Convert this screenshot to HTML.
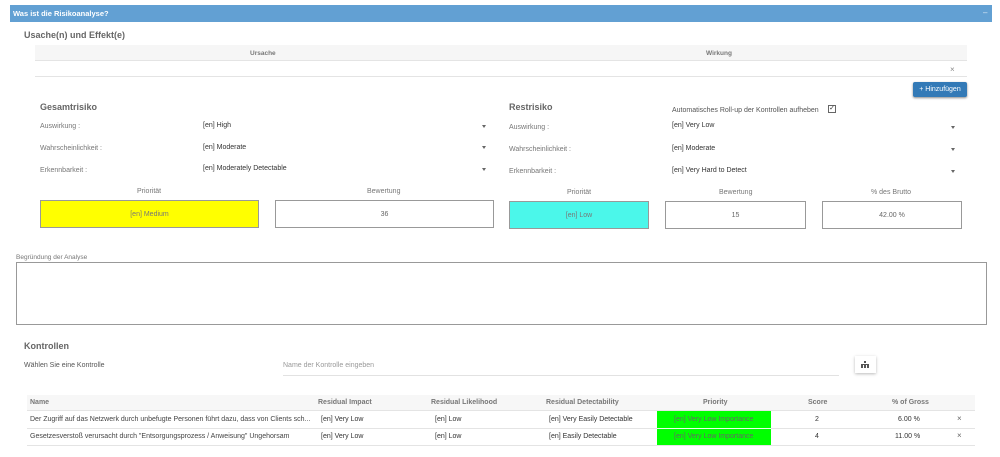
<!DOCTYPE html>
<html><head><meta charset="utf-8"><style>
*{margin:0;padding:0;box-sizing:border-box}
body{width:1000px;height:457px;background:#fff;font-family:"Liberation Sans",sans-serif;color:#555;position:relative;overflow:hidden;font-size:7px}
.a{position:absolute;white-space:nowrap}
.b{font-weight:bold}
.box{position:absolute;border:1px solid #999;display:flex;align-items:center;justify-content:center;font-size:7px;color:#666}
.arr{position:absolute;width:0;height:0;border-left:2px solid transparent;border-right:2px solid transparent;border-top:3px solid #666}
.lbl{color:#777;font-size:7px}
.val{color:#333;font-size:7px}
.hd{color:#777;font-size:7px;font-weight:bold}
</style></head><body>
<div class="a" style="left:10px;top:5px;width:982px;height:17px;background:#62a0d3"></div>
<div class="a b" style="left:13px;top:9px;color:#fff;font-size:7.5px">Was ist die Risikoanalyse?</div>
<div class="a" style="left:983px;top:8px;color:#dfeaf5;font-size:8px">–</div>

<div class="a b" style="left:24px;top:30px;font-size:9px;color:#666">Usache(n) und Effekt(e)</div>
<div class="a" style="left:35px;top:45px;width:932px;height:16px;background:#f6f6f6;border-bottom:1px solid #e4e4e4"></div>
<div class="a hd" style="left:250px;top:50px;font-size:6.5px">Ursache</div>
<div class="a hd" style="left:706px;top:50px;font-size:6.5px">Wirkung</div>
<div class="a" style="left:35px;top:76px;width:932px;height:1px;background:#e4e4e4"></div>
<div class="a" style="left:950px;top:65px;color:#888;font-size:8px">×</div>
<div class="a" style="left:913px;top:82px;width:54px;height:15px;background:#337ab7;border-radius:2px;box-shadow:0 1px 2px #888;color:#fff;font-size:7px;text-align:center;line-height:15px">+ Hinzufügen</div>

<div class="a b" style="left:40px;top:102px;font-size:9px;color:#666">Gesamtrisiko</div>
<div class="a lbl" style="left:40px;top:123px">Auswirkung :</div>
<div class="a lbl" style="left:40px;top:145px">Wahrscheinlichkeit :</div>
<div class="a lbl" style="left:40px;top:167px">Erkennbarkeit :</div>
<div class="a val" style="left:203px;top:122px">[en] High</div>
<div class="a val" style="left:203px;top:144px">[en] Moderate</div>
<div class="a val" style="left:203px;top:165px">[en] Moderately Detectable</div>
<div class="arr" style="left:482px;top:125px"></div>
<div class="arr" style="left:482px;top:146px"></div>
<div class="arr" style="left:482px;top:168px"></div>
<div class="a lbl" style="left:137px;top:188px">Priorität</div>
<div class="a lbl" style="left:367px;top:188px">Bewertung</div>
<div class="box" style="left:40px;top:200px;width:219px;height:28px;background:#ffff00;color:#777">[en] Medium</div>
<div class="box" style="left:275px;top:200px;width:219px;height:28px">36</div>

<div class="a b" style="left:509px;top:102px;font-size:9px;color:#666">Restrisiko</div>
<div class="a lbl" style="left:672px;top:107px;color:#555">Automatisches Roll-up der Kontrollen aufheben</div>
<div class="a" style="left:828px;top:105px;width:8px;height:8px;border:1px solid #666;font-size:7px;line-height:6px;text-align:center;color:#333">✓</div>
<div class="a lbl" style="left:509px;top:124px">Auswirkung :</div>
<div class="a lbl" style="left:509px;top:146px">Wahrscheinlichkeit :</div>
<div class="a lbl" style="left:509px;top:168px">Erkennbarkeit :</div>
<div class="a val" style="left:672px;top:122px">[en] Very Low</div>
<div class="a val" style="left:672px;top:145px">[en] Moderate</div>
<div class="a val" style="left:672px;top:167px">[en] Very Hard to Detect</div>
<div class="arr" style="left:951px;top:126px"></div>
<div class="arr" style="left:951px;top:148px"></div>
<div class="arr" style="left:951px;top:170px"></div>
<div class="a lbl" style="left:567px;top:189px">Priorität</div>
<div class="a lbl" style="left:719px;top:189px">Bewertung</div>
<div class="a lbl" style="left:871px;top:189px">% des Brutto</div>
<div class="box" style="left:509px;top:201px;width:140px;height:28px;background:#4bf7ea;color:#777">[en] Low</div>
<div class="box" style="left:665px;top:201px;width:141px;height:28px">15</div>
<div class="box" style="left:822px;top:201px;width:140px;height:28px">42.00 %</div>

<div class="a lbl" style="left:16px;top:254px;font-size:6.5px">Begründung der Analyse</div>
<div class="a" style="left:16px;top:262px;width:971px;height:63px;border:1px solid #999"></div>

<div class="a b" style="left:24px;top:341px;font-size:9px;color:#666">Kontrollen</div>
<div class="a" style="left:24px;top:362px;font-size:7px;color:#555">Wählen Sie eine Kontrolle</div>
<div class="a" style="left:283px;top:362px;font-size:7px;color:#999">Name der Kontrolle eingeben</div>
<div class="a" style="left:283px;top:375px;width:556px;height:1px;background:#e2e2e2"></div>
<div class="a" style="left:855px;top:356px;width:21px;height:17px;background:#fff;box-shadow:0 1px 3px #bbb"></div>
<svg class="a" style="left:861px;top:361px" width="8" height="7" viewBox="0 0 8 7"><rect x="3" y="0" width="2" height="2" fill="#555"/><rect x="0" y="3" width="8" height="1" fill="#555"/><rect x="0" y="4" width="2" height="3" fill="#555"/><rect x="3" y="4" width="2" height="3" fill="#555"/><rect x="6" y="4" width="2" height="3" fill="#555"/></svg>

<div class="a" style="left:27px;top:395px;width:948px;height:16px;background:#f7f7f7;border-bottom:1px solid #e4e4e4"></div>
<div class="a hd" style="left:30px;top:399px">Name</div>
<div class="a hd" style="left:318px;top:399px">Residual Impact</div>
<div class="a hd" style="left:431px;top:399px">Residual Likelihood</div>
<div class="a hd" style="left:546px;top:399px">Residual Detectability</div>
<div class="a hd" style="left:703px;top:399px">Priority</div>
<div class="a hd" style="left:808px;top:399px">Score</div>
<div class="a hd" style="left:892px;top:399px">% of Gross</div>

<div class="a" style="left:27px;top:428px;width:948px;height:1px;background:#e4e4e4"></div>
<div class="a" style="left:27px;top:445px;width:948px;height:1px;background:#e4e4e4"></div>
<div class="a" style="left:657px;top:411px;width:114px;height:34px;background:#00ff00"></div>
<div class="a" style="left:657px;top:428px;width:114px;height:1px;background:#e8ffe8"></div>

<div class="a val" style="left:30px;top:416px;color:#444">Der Zugriff auf das Netzwerk durch unbefugte Personen führt dazu, dass von Clients sch...</div>
<div class="a val" style="left:321px;top:416px">[en] Very Low</div>
<div class="a val" style="left:435px;top:416px">[en] Low</div>
<div class="a val" style="left:549px;top:416px">[en] Very Easily Detectable</div>
<div class="a" style="left:674px;top:416px;color:#666">[en] Very Low Importance</div>
<div class="a val" style="left:815px;top:416px">2</div>
<div class="a val" style="left:898px;top:416px">6.00 %</div>
<div class="a" style="left:957px;top:414px;color:#666;font-size:8px">×</div>

<div class="a val" style="left:30px;top:433px;color:#444">Gesetzesverstoß verursacht durch "Entsorgungsprozess / Anweisung" Ungehorsam</div>
<div class="a val" style="left:321px;top:433px">[en] Very Low</div>
<div class="a val" style="left:435px;top:433px">[en] Low</div>
<div class="a val" style="left:549px;top:433px">[en] Easily Detectable</div>
<div class="a" style="left:674px;top:433px;color:#666">[en] Very Low Importance</div>
<div class="a val" style="left:815px;top:433px">4</div>
<div class="a val" style="left:895px;top:433px">11.00 %</div>
<div class="a" style="left:957px;top:431px;color:#666;font-size:8px">×</div>
</body></html>
